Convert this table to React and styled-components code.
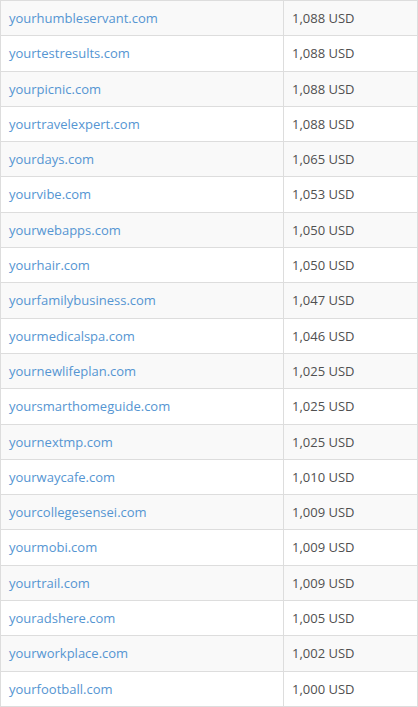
import React from "react";
import styled, { createGlobalStyle } from "styled-components";

const Global = createGlobalStyle`
  html, body { margin: 0; padding: 0; background: #fff; }
  body { font-family: "Open Sans", "Liberation Sans", sans-serif; }
`;

const Table = styled.table`
  width: 418px;
  border-collapse: collapse;
  font-family: "Open Sans", "Liberation Sans", sans-serif;
  font-size: 13px;
`;

const Row = styled.tr`
  background: ${(p) => (p.$striped ? "#f9f9f9" : "#ffffff")};
`;

const Cell = styled.td`
  border: 1px solid #dddddd;
  padding: 8px 8px;
  line-height: 18.3px;
  color: #505050;
  width: ${(p) => p.$w || "auto"};
  white-space: nowrap;
`;

const DomainLink = styled.a`
  color: #5595d2;
  text-decoration: none;
`;

const rows = [
  ["yourhumbleservant.com", "1,088"],
  ["yourtestresults.com", "1,088"],
  ["yourpicnic.com", "1,088"],
  ["yourtravelexpert.com", "1,088"],
  ["yourdays.com", "1,065"],
  ["yourvibe.com", "1,053"],
  ["yourwebapps.com", "1,050"],
  ["yourhair.com", "1,050"],
  ["yourfamilybusiness.com", "1,047"],
  ["yourmedicalspa.com", "1,046"],
  ["yournewlifeplan.com", "1,025"],
  ["yoursmarthomeguide.com", "1,025"],
  ["yournextmp.com", "1,025"],
  ["yourwaycafe.com", "1,010"],
  ["yourcollegesensei.com", "1,009"],
  ["yourmobi.com", "1,009"],
  ["yourtrail.com", "1,009"],
  ["youradshere.com", "1,005"],
  ["yourworkplace.com", "1,002"],
  ["yourfootball.com", "1,000"],
];

export default function App() {
  return (
    <>
      <Global />
      <Table>
        <tbody>
          {rows.map(([d, p], i) => (
            <Row key={d} $striped={i % 2 === 0}>
              <Cell $w="266px">
                <DomainLink href="#">{d}</DomainLink>
              </Cell>
              <Cell>{p} USD</Cell>
            </Row>
          ))}
        </tbody>
      </Table>
    </>
  );
}
